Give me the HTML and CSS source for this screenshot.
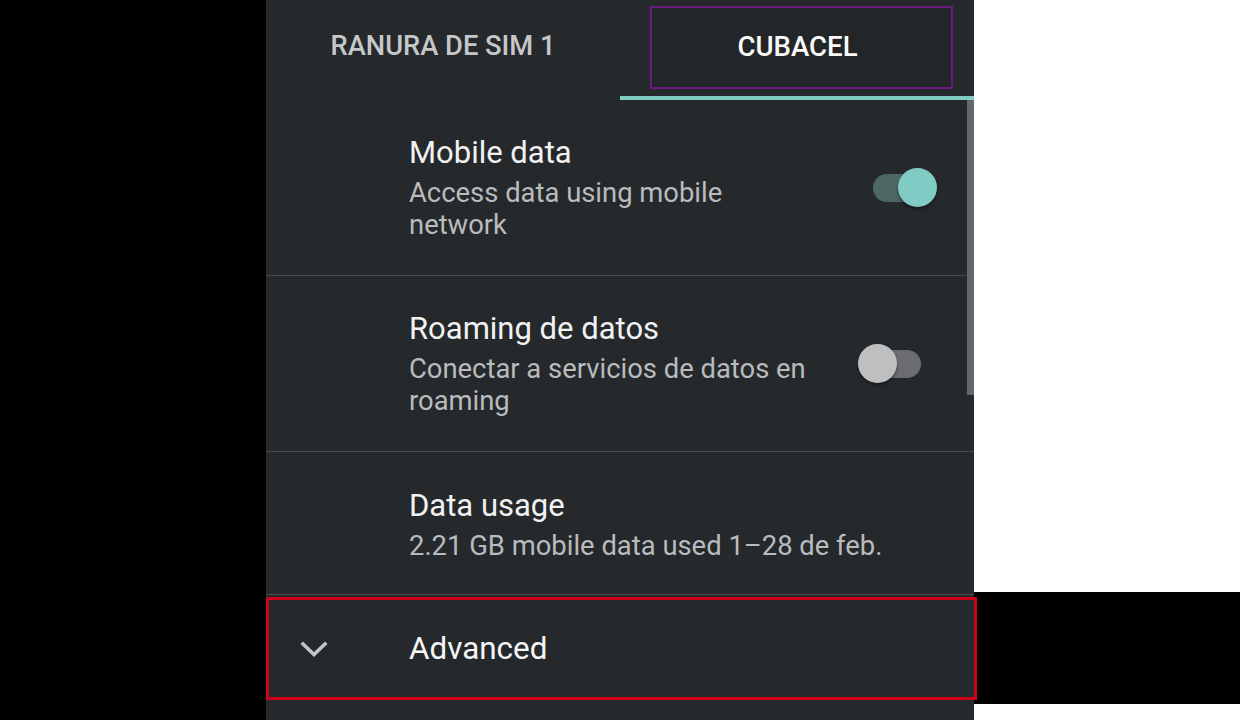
FILE: index.html
```html
<!DOCTYPE html>
<html>
<head>
<meta charset="utf-8">
<link rel="stylesheet" href="styles.css">
</head>
<body>
<div class="screen">
  <div class="side-left"></div>
  <div class="panel">
    <div class="tabs">
      <div class="tab">RANURA DE SIM 1</div>
      <div class="tab active"><span class="focus">CUBACEL</span></div>
    </div>
    <div class="list">
      <div class="scrollbar"></div>
      <div class="row row-tall">
        <div class="row-text">
          <div class="title">Mobile data</div>
          <div class="sub">Access data using mobile<br>network</div>
        </div>
        <div class="switch on"><span class="track"></span><span class="thumb"></span></div>
      </div>
      <div class="row row-tall">
        <div class="row-text">
          <div class="title">Roaming de datos</div>
          <div class="sub">Conectar a servicios de datos en<br>roaming</div>
        </div>
        <div class="switch off"><span class="track"></span><span class="thumb"></span></div>
      </div>
      <div class="row row-mid">
        <div class="row-text">
          <div class="title">Data usage</div>
          <div class="sub">2.21 GB mobile data used 1–28 de feb.</div>
        </div>
      </div>
      <div class="row row-adv">
        <div class="chev">
          <svg width="28" height="18" viewBox="0 0 28 18"><polyline points="3,3 14,13.5 25,3" fill="none" stroke="#c2c4c6" stroke-width="3.6" stroke-linecap="square"/></svg>
        </div>
        <div class="adv-title">Advanced</div>
        <div class="highlight"></div>
      </div>
    </div>
  </div>
  <div class="side-right">
    <div class="white-top"></div>
    <div class="black-mid"></div>
    <div class="white-bot"></div>
  </div>
</div>
</body>
</html>
```
FILE: styles.css
```css
* { box-sizing: border-box; }
html, body { margin: 0; padding: 0; }
body {
  width: 1240px;
  height: 720px;
  overflow: hidden;
  background: #000;
  font-family: Roboto, "Liberation Sans", sans-serif;
}
.screen {
  display: flex;
  width: 1240px;
  height: 720px;
}
.side-left {
  width: 266px;
  background: #000;
}
.panel {
  width: 708px;
  background: #26292c;
  display: flex;
  flex-direction: column;
  position: relative;
}
.tabs {
  height: 100px;
  display: flex;
  position: relative;
}
.tab {
  flex: 1;
  display: flex;
  align-items: center;
  justify-content: center;
  font-size: 27.3px;
  font-weight: 500;
  color: #c5c7c9;
  padding-bottom: 8px;
}
.tab.active {
  color: #fafafa;
  border-bottom: 4px solid #80cbc4;
  padding-bottom: 4px;
  position: relative;
  flex: 0 0 354px;
}
.tab.active .focus {
  position: absolute;
  left: 30px;
  top: 6px;
  width: 303px;
  height: 83px;
  border: 2px solid #6a1b80;
  background: #232628;
  display: flex;
  align-items: center;
  justify-content: center;
  padding-bottom: 2px;
  padding-right: 8px;
  font-size: 27.6px;
}
.list {
  flex: 1;
  position: relative;
  display: flex;
  flex-direction: column;
}
.scrollbar {
  position: absolute;
  right: 0;
  top: 0;
  width: 7px;
  height: 295px;
  background: #65686b;
}
.row {
  display: flex;
  align-items: center;
  padding-left: 143px;
  padding-right: 38px;
  border-bottom: 1px solid #484b4e;
}
.row-tall { height: 176px; }
.row-mid { height: 143px; }
.row-text { flex: 1; }
.title {
  font-size: 31px;
  color: #f2f2f2;
  line-height: 36px;
}
.sub {
  font-size: 27.4px;
  color: #b9bbbd;
  line-height: 32px;
  margin-top: 6px;
}
.row-mid .row-text { margin-top: 4px; }
.switch {
  position: relative;
  width: 64px;
  height: 40px;
  flex: 0 0 64px;
}
.switch .track {
  position: absolute;
  top: 6px;
  height: 28px;
  border-radius: 14px;
}
.switch .thumb {
  position: absolute;
  top: 0;
  width: 39px;
  height: 39px;
  border-radius: 50%;
  box-shadow: 0 2px 3px rgba(0,0,0,0.45);
}
.switch.on .track { left: 1px; width: 57px; background: #4c6764; }
.switch.on .thumb { left: 26px; background: #80cbc4; }
.switch.off .track { left: -8px; width: 57px; background: #6a6c6f; }
.switch.off .thumb { left: -14px; background: #bebfc1; }
.row-adv {
  height: 103px;
  margin-top: 2px;
  padding-left: 34px;
  border-bottom: none;
  position: relative;
}
.chev {
  width: 109px;
  display: flex;
  align-items: center;
}
.chev svg { margin-top: 2px; }
.adv-title {
  font-size: 31.4px;
  color: #f5f5f5;
}
.highlight {
  position: absolute;
  left: 0;
  top: 0;
  width: 711px;
  height: 103px;
  border: 3px solid #d0021b;
}
.side-right {
  width: 266px;
  display: flex;
  flex-direction: column;
}
.white-top { height: 592px; background: #fff; }
.black-mid { height: 112px; background: #000; margin-left: 2px; }
.white-bot { flex: 1; background: #fff; }
```
